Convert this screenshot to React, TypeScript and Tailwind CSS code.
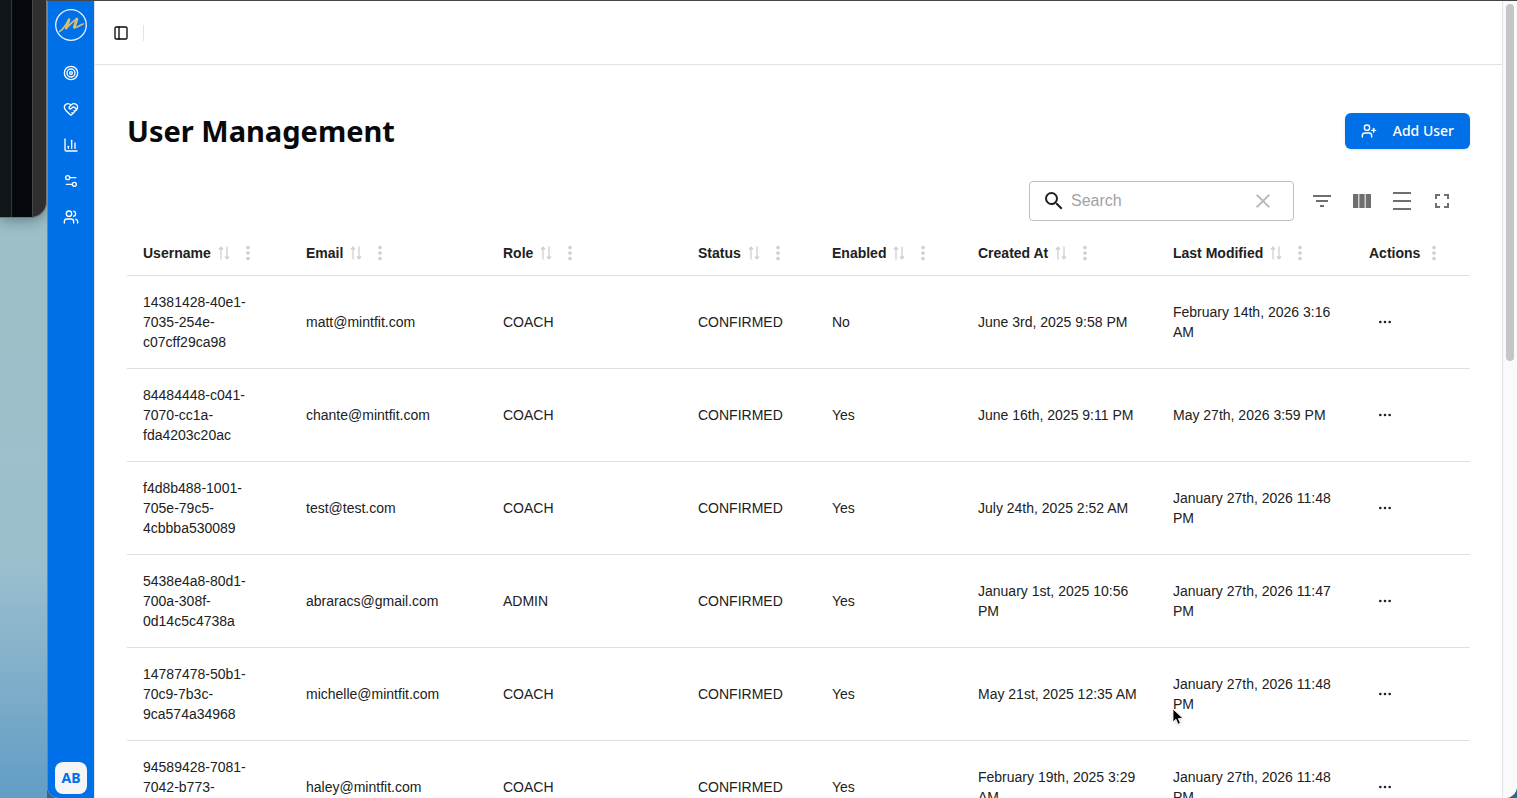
import { useState } from "react";
import {
  ChartColumn,
  Ellipsis,
  HeartHandshake,
  PanelLeft,
  Settings2,
  Target,
  UserPlus,
  Users,
} from "lucide-react";
import {
  MdClose,
  MdDensityMedium,
  MdFilterList,
  MdFullscreen,
  MdMoreVert,
  MdSearch,
  MdViewColumn,
} from "react-icons/md";

interface User {
  username: string;
  email: string;
  role: string;
  status: string;
  enabled: boolean;
  createdAt: string;
  lastModified: string;
}

const users: User[] = [
  {
    username: "14381428-40e1-7035-254e-c07cff29ca98",
    email: "matt@mintfit.com",
    role: "COACH",
    status: "CONFIRMED",
    enabled: false,
    createdAt: "June 3rd, 2025 9:58 PM",
    lastModified: "February 14th, 2026 3:16 AM",
  },
  {
    username: "84484448-c041-7070-cc1a-fda4203c20ac",
    email: "chante@mintfit.com",
    role: "COACH",
    status: "CONFIRMED",
    enabled: true,
    createdAt: "June 16th, 2025 9:11 PM",
    lastModified: "May 27th, 2026 3:59 PM",
  },
  {
    username: "f4d8b488-1001-705e-79c5-4cbbba530089",
    email: "test@test.com",
    role: "COACH",
    status: "CONFIRMED",
    enabled: true,
    createdAt: "July 24th, 2025 2:52 AM",
    lastModified: "January 27th, 2026 11:48 PM",
  },
  {
    username: "5438e4a8-80d1-700a-308f-0d14c5c4738a",
    email: "abraracs@gmail.com",
    role: "ADMIN",
    status: "CONFIRMED",
    enabled: true,
    createdAt: "January 1st, 2025 10:56 PM",
    lastModified: "January 27th, 2026 11:47 PM",
  },
  {
    username: "14787478-50b1-70c9-7b3c-9ca574a34968",
    email: "michelle@mintfit.com",
    role: "COACH",
    status: "CONFIRMED",
    enabled: true,
    createdAt: "May 21st, 2025 12:35 AM",
    lastModified: "January 27th, 2026 11:48 PM",
  },
  {
    username: "94589428-7081-7042-b773-9ca574a34968",
    email: "haley@mintfit.com",
    role: "COACH",
    status: "CONFIRMED",
    enabled: true,
    createdAt: "February 19th, 2025 3:29 AM",
    lastModified: "January 27th, 2026 11:48 PM",
  },
];

const columns = [
  { label: "Username", width: "w-[163px]", sortable: true },
  { label: "Email", width: "w-[197px]", sortable: true },
  { label: "Role", width: "w-[195px]", sortable: true },
  { label: "Status", width: "w-[134px]", sortable: true },
  { label: "Enabled", width: "w-[146px]", sortable: true },
  { label: "Created At", width: "w-[195px]", sortable: true },
  { label: "Last Modified", width: "w-[196px]", sortable: true },
  { label: "Actions", width: "w-[117px]", sortable: false },
];

const navItems = [
  { label: "Goals", icon: Target },
  { label: "Wellness", icon: HeartHandshake },
  { label: "Reports", icon: ChartColumn },
  { label: "Settings", icon: Settings2 },
  { label: "Users", icon: Users },
];

const toolbarItems = [
  { label: "Show filters", icon: MdFilterList },
  { label: "Show columns", icon: MdViewColumn },
  { label: "Toggle density", icon: MdDensityMedium },
  { label: "Full screen", icon: MdFullscreen },
];

function Logo() {
  return (
    <svg viewBox="0 0 32 32" className="size-8 shrink-0" fill="none" aria-label="Logo">
      <circle cx="16" cy="16" r="15.3" stroke="#e8f1fc" strokeWidth="1.3" />
      <g stroke="#d2bd72" strokeLinecap="round" strokeLinejoin="round">
        <path
          d="M4.6 22.4C7.6 21.5 10.5 16.5 14 10.5M11 19.5C14.5 16 18 12 22 9.8M19 18.5C21.5 19.3 24.5 16 28 15"
          strokeWidth="1.8"
        />
        <path d="M14 10.8L11.3 18.8M22 10L19.3 18.2" strokeWidth="2.8" />
      </g>
    </svg>
  );
}

function SortIcon() {
  return (
    <svg viewBox="0 0 12 14" className="h-3.5 w-3" fill="none" stroke="currentColor" strokeWidth="1.3">
      <path d="M3 13.5V1.5M1 3.5L3 1.2L5 3.5" />
      <path d="M9 .5v12M7 10.500L9 12.8L11 10.5" />
    </svg>
  );
}

// The other windows of the desktop, seen at the left edge
function Desktop() {
  return (
    <div className="w-[47px] shrink-0 overflow-hidden bg-linear-to-b from-[#9cc0c6] from-30% via-[#9cbfce] via-70% to-[#629dc5]">
      <div className="flex h-[218px] w-full overflow-hidden rounded-br-2xl border-r border-b border-[#77797b] bg-[#2f2f30] shadow-[0_2px_14px_rgba(60,80,90,0.6)]">
        <div className="w-3 border-r border-[#35383a] bg-[#101618]" />
        <div className="w-[21px] border-r border-[#45484a] bg-[#05090d]" />
      </div>
    </div>
  );
}

function Sidebar() {
  return (
    <aside className="flex w-[47px] shrink-0 flex-col items-center border-l border-[#4a8fcf] bg-[#0070e8] pt-2 pb-1">
      <Logo />
      <nav className="mt-4 flex flex-1 flex-col gap-1 text-white">
        {navItems.map(({ label, icon: Icon }) => (
          <a key={label} href="#" aria-label={label} className="flex size-8 items-center justify-center">
            <Icon className="size-4" />
          </a>
        ))}
      </nav>
      <button
        aria-label="Account"
        className="size-8 rounded-lg bg-[#f5f5f5] font-['Noto_Sans',sans-serif] text-sm font-bold text-[#0070e8]"
      >
        AB
      </button>
    </aside>
  );
}

function UserTable() {
  return (
    <table className="mt-[10px] w-full table-fixed border-separate border-spacing-0 text-left text-sm leading-5 text-[#212121]">
      <thead>
        <tr>
          {columns.map((column) => (
            <th key={column.label} className={`${column.width} border-b border-[#e0e0e0] p-0 pl-4 font-bold`}>
              <div className="flex h-11 items-center gap-[3px] whitespace-nowrap">
                {column.label}
                {column.sortable && (
                  <button aria-label={`Sort by ${column.label}`} className="px-1 text-[#cfcfcf]">
                    <SortIcon />
                  </button>
                )}
                <button aria-label={`${column.label} column actions`} className="text-[#cfcfcf]">
                  <MdMoreVert size={22} />
                </button>
              </div>
            </th>
          ))}
        </tr>
      </thead>
      <tbody>
        {users.map((user) => (
          <tr key={user.username} className="[&>td]:border-b [&>td]:border-[#e0e0e0] [&>td]:p-4">
            <td>{user.username}</td>
            <td>{user.email}</td>
            <td>{user.role}</td>
            <td>{user.status}</td>
            <td>{user.enabled ? "Yes" : "No"}</td>
            <td>{user.createdAt}</td>
            <td>{user.lastModified}</td>
            <td>
              <button aria-label="Open menu" className="flex size-8 items-center justify-center">
                <Ellipsis className="size-4" />
              </button>
            </td>
          </tr>
        ))}
      </tbody>
    </table>
  );
}

export default function App() {
  const [search, setSearch] = useState("");

  return (
    <div className="flex h-screen overflow-hidden bg-[#356583] font-['Liberation_Sans',sans-serif]">
      <Desktop />
      <div className="flex min-w-0 flex-1 overflow-hidden rounded-b-xl border-t border-[#45444c] bg-white">
        <Sidebar />

        <div className="flex min-w-0 flex-1 flex-col border-l border-[#e4e4e7]">
          <header className="flex h-16 shrink-0 items-center gap-2 border-b border-[#e4e4e7] pl-3">
            <button aria-label="Toggle sidebar" className="flex size-7 items-center justify-center text-[#09090b]">
              <PanelLeft className="size-4" />
            </button>
            <div className="h-4 w-px bg-[#e4e4e7]" />
          </header>

          <main className="min-h-0 flex-1 overflow-hidden px-8 pt-12">
            <div className="flex items-center justify-between font-['Noto_Sans',sans-serif]">
              <h1 className="text-[29px] leading-9 font-bold text-[#09090b]">User Management</h1>
              <button className="flex h-9 items-center gap-4 rounded-md bg-[#0070e8] px-4 text-sm font-medium text-white shadow-sm">
                <UserPlus className="size-4" />
                Add User
              </button>
            </div>

            {/* Table toolbar */}
            <div className="mt-8 flex items-center justify-end pr-2 text-[#6f6f6f]">
              <div className="mr-2 flex h-10 w-[265px] items-center rounded border border-[#c0c0c0] pr-[18px] pl-3">
                <MdSearch size={24} className="shrink-0 text-[#212121]" />
                <input
                  type="text"
                  aria-label="Search"
                  placeholder="Search"
                  value={search}
                  onChange={(e) => setSearch(e.target.value)}
                  className="ml-[5px] min-w-0 flex-1 text-base text-[#212121] outline-none placeholder:text-[#a2a2a2]"
                />
                <button aria-label="Clear search" onClick={() => setSearch("")} className="text-[#bdbdbd]">
                  <MdClose size={24} />
                </button>
              </div>
              {toolbarItems.map(({ label, icon: Icon }) => (
                <button key={label} aria-label={label} className="flex size-10 items-center justify-center">
                  <Icon size={24} />
                </button>
              ))}
            </div>

            <UserTable />
          </main>
        </div>

        {/* Scrollbar */}
        <div className="w-[15px] shrink-0 border-l border-[#e4e4e4] bg-[#fafafa] pt-[3px] pl-[3px]">
          <div className="h-[45%] w-2 rounded-full bg-[#c6c6c6]" />
        </div>
      </div>

      {/* Mouse pointer */}
      <svg viewBox="0 0 12 18" className="pointer-events-none absolute top-[708px] left-[1172px] h-[18px] w-3 drop-shadow">
        <path d="M1 1v13l3-2.8 2 5 2.4-1-2.1-4.7H11z" fill="#000" stroke="#fff" strokeWidth=".8" />
      </svg>
    </div>
  );
}
